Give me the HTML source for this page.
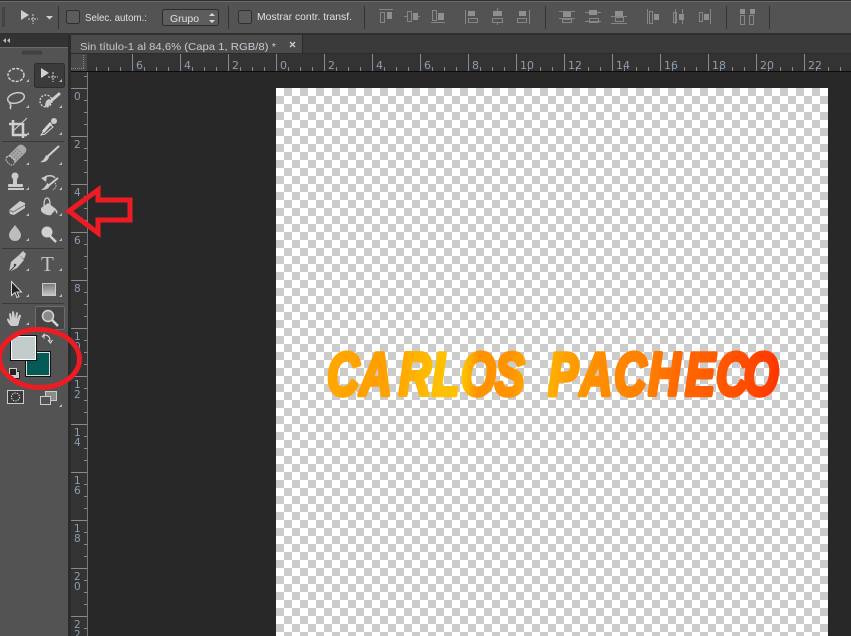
<!DOCTYPE html>
<html><head><meta charset="utf-8"><title>Photoshop</title>
<style>
html,body{margin:0;padding:0;background:#282828;width:851px;height:636px;overflow:hidden}
svg{display:block;position:absolute;left:0;top:0}
text{font-family:"Liberation Sans",sans-serif}
.ui{font-size:10.5px;fill:#e0e0e0}
.r{font-size:11px;fill:#8b9db2;font-family:"DejaVu Sans",sans-serif}
.rv{font-size:10.5px;fill:#8b9db2;font-family:"DejaVu Sans",sans-serif}
.t{fill:#cbcbcb}
.s{fill:none;stroke:#cbcbcb;stroke-width:1.5}
.a{fill:none;stroke:#868686;stroke-width:1}
.af{fill:#8f8f8f}
</style></head><body>
<svg width="851" height="636" viewBox="0 0 851 636" xmlns="http://www.w3.org/2000/svg">
<defs>
<pattern id="ck" x="276" y="88" width="16" height="16" patternUnits="userSpaceOnUse">
<rect width="16" height="16" fill="#fff"/><rect x="8" width="8" height="8" fill="#ccc"/><rect y="8" width="8" height="8" fill="#ccc"/>
</pattern>
<pattern id="hmin" x="276" y="67" width="12" height="4" patternUnits="userSpaceOnUse"><rect width="1" height="4" fill="#8a8a8a"/></pattern>
<pattern id="hmaj" x="276" y="54" width="48" height="17" patternUnits="userSpaceOnUse"><rect width="1" height="17" fill="#8a8a8a"/></pattern>
<pattern id="vmin" x="84" y="88" width="3" height="12" patternUnits="userSpaceOnUse"><rect width="3" height="1" fill="#8a8a8a"/></pattern>
<pattern id="vmaj" x="71" y="88" width="16" height="48" patternUnits="userSpaceOnUse"><rect width="16" height="1" fill="#8a8a8a"/></pattern>
<linearGradient id="tg" gradientUnits="userSpaceOnUse" x1="442" y1="-30" x2="1060" y2="10">
<stop offset="0" stop-color="#ffa800"/><stop offset=".12" stop-color="#ff9f00"/><stop offset=".2" stop-color="#ffb400"/><stop offset=".24" stop-color="#ffc000"/><stop offset=".3" stop-color="#ffc000"/><stop offset=".33" stop-color="#ff9200"/><stop offset=".4" stop-color="#ff9400"/><stop offset=".47" stop-color="#ffb800"/><stop offset=".52" stop-color="#ffa000"/><stop offset=".58" stop-color="#ff9000"/><stop offset=".65" stop-color="#ff8400"/><stop offset=".7" stop-color="#ff8000"/><stop offset=".76" stop-color="#ff6a00"/><stop offset=".85" stop-color="#ff5a00"/><stop offset=".92" stop-color="#ff4a00"/><stop offset="1" stop-color="#ff3000"/>
</linearGradient>
<linearGradient id="rg" x1="0" y1="0" x2="0" y2="1"><stop offset="0" stop-color="#777"/><stop offset="1" stop-color="#c8c8c8"/></linearGradient>
</defs>

<!-- doc area -->
<rect x="70" y="54" width="781" height="582" fill="#282828"/>
<rect x="276" y="88" width="552" height="548" fill="url(#ck)"/>

<!-- artwork text -->
<g transform="translate(0,395) scale(.74,1)">
<text x="442 486 539 584 623 669 741 784 830 876 926 968 1005" y="0" font-size="60" font-weight="700" font-style="italic" fill="url(#tg)" stroke="url(#tg)" stroke-width="4.500" stroke-linejoin="round" style="font-family:'Liberation Sans',sans-serif">CARLOSPACHECO</text>
</g>

<!-- options bar -->
<rect width="851" height="35" fill="#535353"/>
<rect width="851" height="1" fill="#2e2e2e"/>
<rect y="1" width="851" height="1" fill="#6a6a6a"/>
<rect y="33" width="851" height="2" fill="#303030"/>
<path d="M2 8h3M2 10h3M2 12h3M2 14h3M2 16h3M2 18h3M2 20h3M2 22h3M2 24h3M2 26h3" stroke="#333" stroke-width="1"/>
<path d="M21 10L29 15L21 20Z" fill="#d0d0d0"/>
<path d="M33 14v10M28 19h10" stroke="#cfcfcf" stroke-width="1" stroke-dasharray="2 1"/>
<path d="M46 16h7l-3.500 3.500z" fill="#d0d0d0"/>
<rect x="58" y="6" width="1" height="23" fill="#333"/>
<rect x="66.500" y="10.500" width="13" height="13" rx="2" fill="#5c5c5c" stroke="#2f2f2f"/>
<text x="85" y="21" class="ui" textLength="62" lengthAdjust="spacingAndGlyphs">Selec. autom.:</text>
<rect x="162.500" y="9.500" width="56" height="16" rx="2" fill="#5d5d5d" stroke="#2c2c2c"/>
<text x="170" y="22" class="ui" textLength="29" lengthAdjust="spacingAndGlyphs">Grupo</text>
<path d="M209 16l3-3 3 3zM209 20l3 3 3-3z" fill="#d8d8d8"/>
<rect x="228" y="6" width="1" height="23" fill="#333"/>
<rect x="238.500" y="10.500" width="13" height="13" rx="2" fill="#5c5c5c" stroke="#2f2f2f"/>
<text x="257" y="20" class="ui" textLength="95" lengthAdjust="spacingAndGlyphs">Mostrar contr. transf.</text>
<rect x="364" y="6" width="1" height="23" fill="#333"/>
<rect x="545" y="6" width="1" height="23" fill="#333"/>
<rect x="726" y="6" width="1" height="23" fill="#333"/>
<rect x="769" y="6" width="1" height="23" fill="#333"/>

<!-- align icons -->
<path class="a" d="M379 9.500h14M380.500 12.500h4v10h-4z"/><rect x="387" y="12" width="5" height="7" class="af"/>
<path class="a" d="M404 16.500h3M417 16.500h3M407.500 11.500h4v10h-4z"/><rect x="413" y="13" width="5" height="7" class="af"/>
<path class="a" d="M431 22.500h14M432.500 10.500h4v10h-4z"/><rect x="438" y="13" width="6" height="7" class="af"/>
<path class="a" d="M465.500 10v14M468.500 18.500h9v4h-9z"/><rect x="468" y="11" width="7" height="5" class="af"/>
<path class="a" d="M497.500 8v3M497.500 22v3M492.500 18.500h10v4h-10z"/><rect x="493" y="11" width="9" height="5" class="af"/>
<path class="a" d="M529.500 10v14M517.500 18.500h9v4h-9z"/><rect x="519" y="11" width="7" height="5" class="af"/>
<path class="a" d="M559 11.500h16M559 18.500h16M562.500 19.500h9v3h-9z"/><rect x="563" y="12" width="8" height="5" class="af"/>
<path class="a" d="M585 12.500h16M585 21.500h16M589.500 18.500h9v4h-9z"/><rect x="589" y="10" width="8" height="5" class="af"/>
<path class="a" d="M611 16.500h16M611 23.500h16M615.500 17.500h8v4h-8z"/><rect x="615" y="11" width="8" height="5" class="af"/>
<path class="a" d="M647.500 9v15M649.500 11.500h3v12h-3z"/><rect x="654" y="14" width="5" height="6" class="af"/>
<path class="a" d="M675.500 9v15M673.500 12.500h3v10h-3zM682.500 9v15"/><rect x="679" y="14" width="5" height="6" class="af"/>
<path class="a" d="M710.500 9v15M699.500 12.500h3v9h-3z"/><rect x="704" y="14" width="5" height="6" class="af"/>
<path class="a" d="M740.500 15.500h4v9h-4zM749.500 15.500h4v9h-4z"/><rect x="740" y="9" width="5" height="5" class="af"/><rect x="750" y="9" width="5" height="5" class="af"/>

<!-- tab bar -->
<rect x="70" y="35" width="781" height="19" fill="#3a3a3a"/>
<rect x="71" y="35" width="231" height="19" fill="#4b4b4b"/>
<rect x="302" y="35" width="1" height="19" fill="#2a2a2a"/>
<rect x="70" y="53" width="781" height="1" fill="#2c2c2c"/>
<text x="80" y="50" class="ui" style="fill:#c4cbd3" font-size="11" textLength="196" lengthAdjust="spacingAndGlyphs">Sin título-1 al 84,6% (Capa 1, RGB/8) *</text>
<path d="M290 42l5 5M295 42l-5 5" stroke="#ccc" stroke-width="1.300"/>

<!-- horizontal ruler -->
<rect x="71" y="54" width="780" height="17" fill="#333"/>
<rect x="87" y="67" width="764" height="4" fill="url(#hmin)"/>
<rect x="87" y="54" width="764" height="17" fill="url(#hmaj)"/>
<rect x="71" y="71" width="780" height="1" fill="#0c0c0c"/>
<text class="r" x="136" y="69">6</text><text class="r" x="184" y="69">4</text><text class="r" x="232" y="69">2</text><text class="r" x="280" y="69">0</text>
<text class="r" x="328" y="69">2</text><text class="r" x="376" y="69">4</text><text class="r" x="424" y="69">6</text><text class="r" x="472" y="69">8</text>
<text class="r" x="520" y="69">10</text><text class="r" x="568" y="69">12</text><text class="r" x="616" y="69">14</text><text class="r" x="664" y="69">16</text>
<text class="r" x="712" y="69">18</text><text class="r" x="760" y="69">20</text><text class="r" x="808" y="69">22</text>

<!-- vertical ruler -->
<rect x="71" y="72" width="16" height="564" fill="#333"/>
<rect x="84" y="72" width="3" height="564" fill="url(#vmin)"/>
<rect x="71" y="88" width="16" height="548" fill="url(#vmaj)"/>
<rect x="87" y="72" width="1" height="564" fill="#777"/>
<rect x="71" y="54" width="16" height="17" fill="#494949"/>
<path d="M71 68.500h13M83.500 55v14" stroke="#8a8a8a" stroke-dasharray="1 1"/>
<text class="rv" x="74" y="100">0</text>
<text class="rv" x="74" y="148">2</text>
<text class="rv" x="74" y="196">4</text>
<text class="rv" x="74" y="244">6</text>
<text class="rv" x="74" y="292">8</text>
<text class="rv" x="74" y="340">1</text><text class="rv" x="74" y="350">0</text>
<text class="rv" x="74" y="388">1</text><text class="rv" x="74" y="398">2</text>
<text class="rv" x="74" y="436">1</text><text class="rv" x="74" y="446">4</text>
<text class="rv" x="74" y="484">1</text><text class="rv" x="74" y="494">6</text>
<text class="rv" x="74" y="532">1</text><text class="rv" x="74" y="542">8</text>
<text class="rv" x="74" y="580">2</text><text class="rv" x="74" y="590">0</text>
<text class="rv" x="74" y="628">2</text><text class="rv" x="74" y="638">2</text>

<!-- tool panel -->
<rect x="0" y="35" width="68" height="601" fill="#535353"/>
<rect x="0" y="35" width="68" height="12" fill="#333"/>
<rect x="0" y="47" width="68" height="1" fill="#6a6a6a"/>
<rect x="68" y="35" width="3" height="601" fill="#2b2b2b"/>
<path d="M6 38l-3 2.500 3 2.500zM10 38l-3 2.500 3 2.500z" fill="#bbb"/>
<path d="M23 50.500v4M25 50.500v4M27 50.500v4M29 50.500v4M31 50.500v4M33 50.500v4M35 50.500v4M37 50.500v4M39 50.500v4M41 50.500v4" stroke="#2e2e2e"/>
<rect x="2" y="141" width="62" height="1" fill="#3a3a3a"/>
<rect x="2" y="248" width="62" height="1" fill="#3a3a3a"/>
<rect x="2" y="303" width="62" height="1" fill="#3a3a3a"/>

<!-- selected tools -->
<rect x="34.500" y="63.500" width="30" height="24" rx="2" fill="#3b3b3b" stroke="#2d2d2d"/>
<rect x="35.500" y="306.500" width="29" height="23" rx="2" fill="#454545" stroke="#6d6d6d"/>

<!-- row 1 -->
<ellipse cx="16" cy="75" rx="8" ry="6.500" fill="none" stroke="#d4d4d4" stroke-width="1.400" stroke-dasharray="3 1.300"/>
<path d="M41 68L49 73L41 78Z" fill="#d0d0d0"/>
<path d="M53 72v10M48 77h10" stroke="#d4d4d4" stroke-dasharray="2 1"/>
<!-- row 2 -->
<ellipse cx="16" cy="98" rx="8.500" ry="5" transform="rotate(-15 16 98)" class="s"/>
<path class="s" d="M10 102c-1 2 1 3 1 4-1 1-1 2 0 3"/>
<circle cx="46" cy="101" r="6" fill="none" stroke="#d4d4d4" stroke-width="1.300" stroke-dasharray="2 1.300"/>
<path d="M59 94L52 100" stroke="#d0d0d0" stroke-width="3" stroke-linecap="round"/>
<path d="M45 107c4 0 6-3 7-6l-3-2c-3 1-4 4-4 8z" class="t"/>
<!-- row 3 -->
<path d="M13 120v15h14M9 124h14v14" fill="none" stroke="#d0d0d0" stroke-width="2.500"/>
<path d="M27 118L12 132" stroke="#d0d0d0" stroke-width="1"/>
<path d="M43 132l8-9" stroke="#d0d0d0" stroke-width="3"/>
<path d="M41 135l2-3 7-8 3 3-8 7z" fill="none" stroke="#ddd"/>
<circle cx="54" cy="121" r="3" class="t"/>
<!-- row 4 -->
<g transform="rotate(-45 16 155)">
<rect x="5" y="150" width="23" height="10" rx="4" fill="#a8a8a8"/>
<rect x="5" y="150" width="6" height="10" rx="3" fill="#535353" stroke="#d0d0d0" stroke-dasharray="1.500 1"/>
<path d="M13 152h9M13 155h9M13 158h9" stroke="#666" stroke-dasharray="1 1.500"/>
</g>
<path d="M59 146L47 157" stroke="#d0d0d0" stroke-width="2"/>
<path d="M40 162c4 1 8-1 9-5l-3-2c-1 3-3 6-6 7z" class="t"/>
<!-- row 5 -->
<circle cx="15" cy="176" r="3.500" class="t"/><rect x="13" y="178" width="4" height="6" class="t"/>
<rect x="8" y="184" width="15" height="3" rx="1" class="t"/><rect x="8" y="188" width="16" height="2" class="t"/>
<path class="s" d="M44 178c3-3 9-3 11 0"/><path d="M41 178l5 4 1-6z" class="t"/>
<path d="M58 178L48 186" stroke="#d0d0d0" stroke-width="2"/>
<path d="M41 190c4 0 8-1 9-5l-3-2c-1 3-3 5-6 7z" class="t"/>
<path d="M55 183c2 2 1 5-2 7" fill="none" stroke="#ccc" stroke-dasharray="1.500 1"/>
<!-- row 6 -->
<path d="M9 210L20 201L25 203L25 208L14 215L10 214Z" class="t"/>
<path d="M9 210l4 2 12-7" fill="none" stroke="#777"/>
<path d="M41 208l7-5 8 6-5 6c-3 1-8-1-10-4z" class="t"/>
<path d="M44 206c0-5 1-8 3-8s3 3 3 7" fill="none" stroke="#ccc" stroke-width="1.300"/>
<path d="M55 209c2 1 3 2 2 5-1-1-2-3-2-5z" class="t"/>
<!-- row 7 -->
<path d="M15 225c3 4 6 7 6 10a6 6 0 0 1-12 0c0-3 3-6 6-10z" fill="#bdbdbd"/>
<circle cx="47" cy="232" r="5.500" fill="#d0d0d0"/>
<path d="M50 236L56 242" stroke="#d0d0d0" stroke-width="2.500"/>
<!-- row 8 -->
<path d="M9 272l2-10 8-7 5 5-7 8z" class="t"/>
<path d="M19 255l4-4 3 3-2 5z" class="t"/>
<path d="M9 272l6-6" stroke="#444"/><circle cx="15" cy="265" r="1.300" fill="#444"/>
<text x="41" y="271" font-size="21" fill="#c4c4c4" style="font-family:'Liberation Serif',serif">T</text>
<!-- row 9 -->
<path d="M11.500 281.500v14l3.500-3 2 5 2-1-2-4.500h4.500z" fill="#222" stroke="#d8d8d8"/>
<rect x="42.500" y="283.500" width="13" height="12" fill="url(#rg)" stroke="#ccc"/>
<!-- row 10 -->
<path d="M11 326c-2-2-4-5-4-7 1-1 2 0 3 2l-1-7c0-1 2-1 2 0l1 4 0-6c0-1 2-1 2 0l1 6 1-5c0-1 2-1 2 0l-1 6 2-4c1-1 2 0 2 1l-2 6c0 2-1 4-2 4z" class="t"/>
<circle cx="48" cy="316" r="5.500" fill="#8a8a8a" stroke="#d4d4d4" stroke-width="1.500"/>
<path d="M52 320L58 326" stroke="#d4d4d4" stroke-width="2.500"/>

<!-- small flyout triangles -->
<path fill="#bdbdbd" d="M29 79v3h-3zM62 79v3h-3zM29 105v3h-3zM62 105v3h-3zM29 132v3h-3zM62 132v3h-3zM29 162v3h-3zM62 162v3h-3zM29 187v3h-3zM62 187v3h-3zM29 213v3h-3zM62 213v3h-3zM29 238v3h-3zM62 238v3h-3zM29 268v3h-3zM62 268v3h-3zM29 294v3h-3zM62 294v3h-3zM29 322v3h-3zM62 404v3h-3z"/>

<!-- colours -->
<rect x="25.500" y="351.500" width="25" height="25" fill="#045a54" stroke="#111"/>
<rect x="26.500" y="352.500" width="23" height="23" fill="none" stroke="#ddd"/>
<rect x="10.500" y="335.500" width="26" height="25" fill="#c2cccc" stroke="#111"/>
<rect x="11.500" y="336.500" width="24" height="23" fill="none" stroke="#fff"/>
<path d="M44 335c4 0 6 2 6 6M42 337l2-2.500 0 4M48 340l2.500 3 2-3" fill="none" stroke="#ddd" stroke-width="1.100"/>
<rect x="12.500" y="371.500" width="7" height="7" fill="#ccc" stroke="#222"/>
<rect x="9.500" y="368.500" width="7" height="7" fill="#222" stroke="#ccc"/>
<!-- modes -->
<rect x="7.500" y="390.500" width="16" height="13" fill="#3a3a3a" stroke="#ccc"/>
<circle cx="15.500" cy="397" r="4" fill="none" stroke="#ddd" stroke-dasharray="1.500 1"/>
<rect x="45.500" y="391.500" width="11" height="9" fill="#8c8c8c" stroke="#ccc"/>
<rect x="40.500" y="396.500" width="10" height="8" fill="#535353" stroke="#ccc"/>

<!-- red annotations -->
<path d="M69 211L98 190V200H130V220H98V233Z" fill="none" stroke="#ed1c24" stroke-width="5"/>
<ellipse cx="39.500" cy="358.500" rx="40" ry="29" fill="none" stroke="#ed1c24" stroke-width="5" transform="rotate(2 39.500 358.500)"/>
</svg>
</body></html>
